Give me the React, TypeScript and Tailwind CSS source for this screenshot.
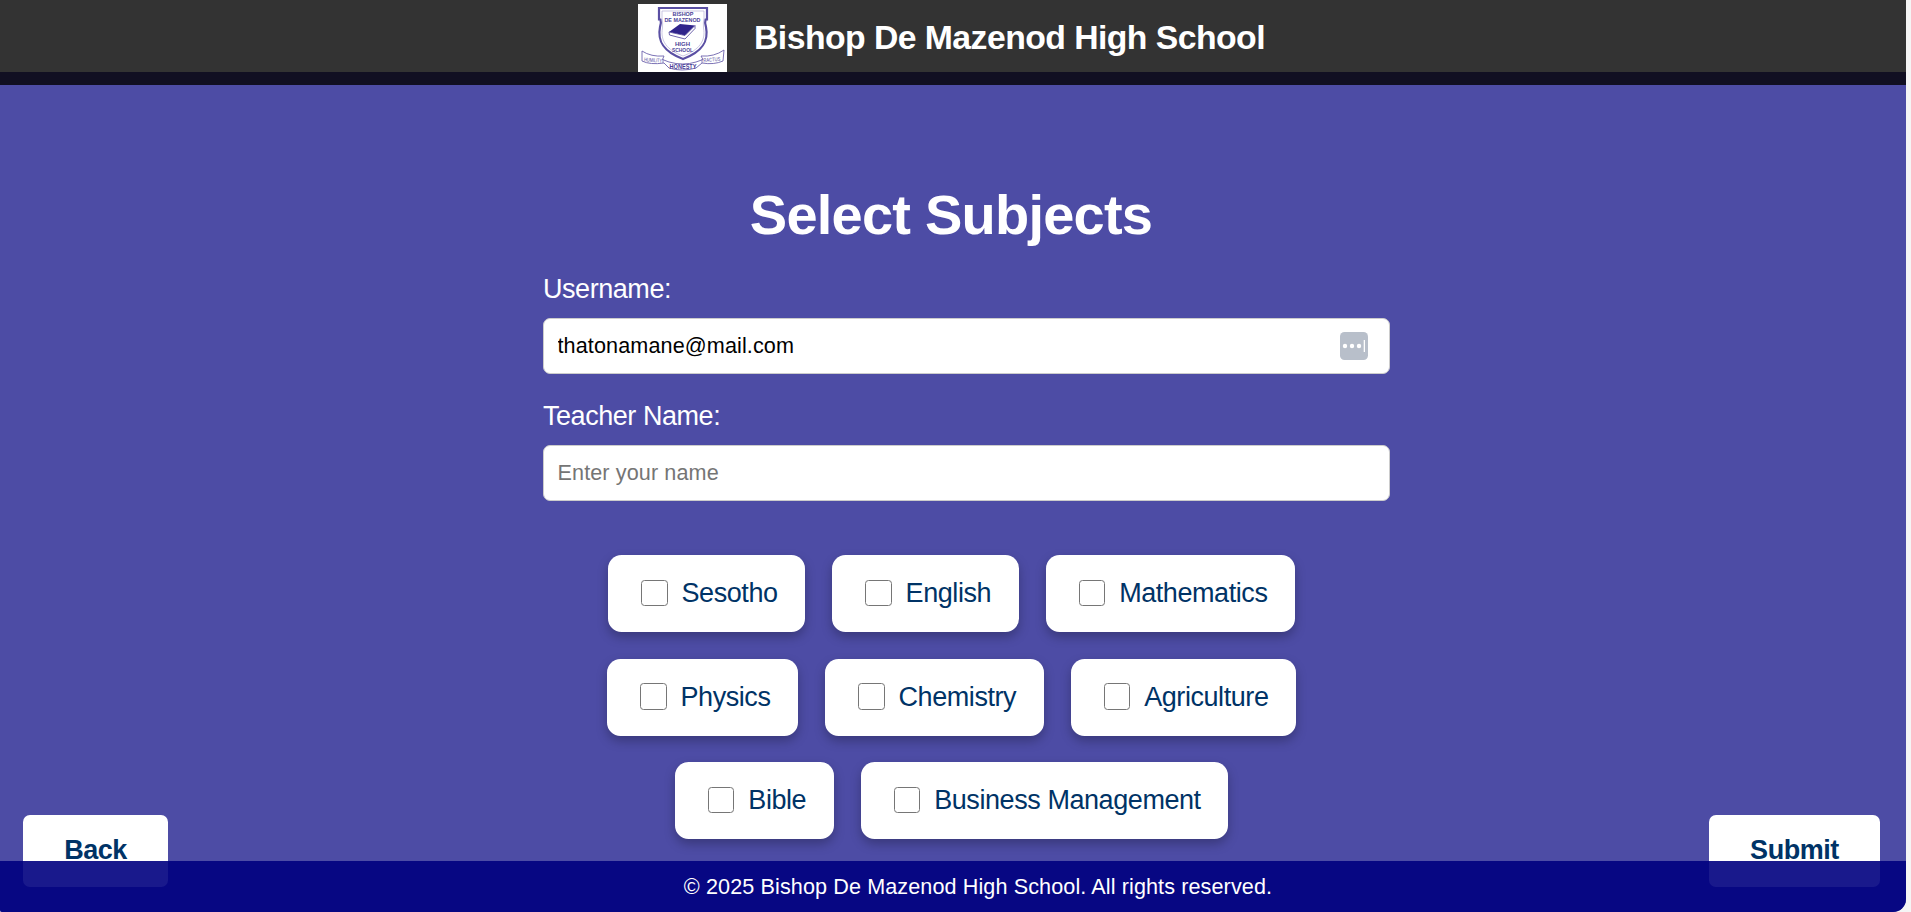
const subjectRows = [
  ["Sesotho", "English", "Mathematics"],
  ["Physics", "Chemistry", "Agriculture"],
  ["Bible", "Business Management"],
];

function Crest() {
  return (
    <svg width="89" height="68" viewBox="0 0 89 68" className="mt-1 shrink-0 bg-white" fontFamily="Liberation Sans, sans-serif" fontWeight="700" textAnchor="middle" fill="#4b3f98">
      <path d="M21 4H69V15.500H67.500Q66.500 19 68 23C71 38 64 48 45 55C26 48 19 38 22 23Q23.500 19 22.500 15.500H21Z" fill="#fff" stroke="#5a4fa3" strokeWidth="2.200" />
      <path d="M24 7H66V14Q65 19 65.500 24C68 37 61 46 45 52C29 46 22 37 24.500 24Q25 19 24 14Z" fill="none" stroke="#b5afd6" strokeWidth=".7" />
      <text x="45" y="12" fontSize="6" textLength="21" lengthAdjust="spacingAndGlyphs">BISHOP</text>
      <text x="44.500" y="18.200" fontSize="6" textLength="36" lengthAdjust="spacingAndGlyphs">DE MAZENOD</text>
      <path d="M31 28L42 20L57 21.500L47 31.500Z" fill="#30248b" />
      <path d="M31 28L47 31.500L57 21.500V24.500L47 35L31.500 31Z" fill="#fff" stroke="#4b3f98" strokeWidth=".8" />
      <text x="44.500" y="41.500" fontSize="6" textLength="15" lengthAdjust="spacingAndGlyphs">HIGH</text>
      <text x="44.500" y="47.600" fontSize="6" textLength="21" lengthAdjust="spacingAndGlyphs">SCHOOL</text>
      <path d="M4 47Q13 53 26 52L24.500 55.500L31 58Q45 62 58 58L65 55.500L63 52Q76 53 86 46L85 57Q76 61 64 59L58 64Q44 68 31 64L26 59Q12 61 4 57Z" fill="#fff" stroke="#6d63ad" strokeWidth=".9" />
      <path d="M25 55V59M64 55V59" stroke="#6d63ad" strokeWidth=".8" />
      <text x="15" y="58" fontSize="5.500" fontWeight="400" textLength="18" lengthAdjust="spacingAndGlyphs" transform="rotate(5 15 57)">HUMILITY</text>
      <text x="45" y="65" fontSize="7" textLength="27" lengthAdjust="spacingAndGlyphs">HONESTY</text>
      <text x="74" y="57.500" fontSize="5.500" fontWeight="400" textLength="17" lengthAdjust="spacingAndGlyphs" transform="rotate(-5 74 57)">RACTUS</text>
    </svg>
  );
}

function Field({ label, value, placeholder, badge }: { label: string; value?: string; placeholder?: string; badge?: boolean }) {
  return (
    <div className="flex h-[127px] flex-col">
      <label className="mb-[13px] h-[31px] text-[27px] leading-[31px] tracking-[-0.450px]">{label}</label>
      <div className="flex h-[56px] items-center rounded-[7px] border border-[#ccc] bg-white pr-[21px] pl-[13.500px]">
        <input className="mb-[2px] min-w-0 flex-1 text-[21.600px] leading-[25px] tracking-[0.110px] text-black outline-none placeholder:text-[#757575]" defaultValue={value} placeholder={placeholder} />
        {badge && (
          <svg width="28" height="28" viewBox="0 0 28 28" className="mb-[1px]">
            <rect width="28" height="28" rx="4.500" fill="#b8bfca" />
            <g fill="#fff">
              <circle cx="5" cy="14" r="2.200" />
              <circle cx="12" cy="14" r="2.200" />
              <circle cx="19" cy="14" r="2.200" />
              <rect x="23.700" y="8" width="1.300" height="12" />
            </g>
          </svg>
        )}
      </div>
    </div>
  );
}

function SubjectCard({ name }: { name: string }) {
  return (
    <label className="flex h-[77px] items-center rounded-[13.500px] bg-white pr-[27.500px] pl-[33px] text-[27px] leading-[31px] tracking-[-0.430px] text-[#003366] shadow-[0_5px_11px_rgba(0,0,0,0.26)]">
      <input type="checkbox" className="mr-[14px] mb-[1px] size-[26.500px] appearance-none rounded-[3.500px] border-[1.350px] border-[#767676] bg-white" />
      {name}
    </label>
  );
}

export default function App() {
  return (
    <div className="h-[912px] w-full overflow-hidden bg-[#f5f5f5] font-['Liberation_Sans',Arial,sans-serif]">
      <div className="grid h-full w-[1906px] grid-cols-1 grid-rows-1 overflow-hidden rounded-br-[13px] rounded-bl-[2px] bg-[#4d4ca5] text-white">
        <div className="col-start-1 row-start-1 flex flex-col">
          <header className="flex h-[85px] shrink-0 justify-center border-b-[13px] border-[#110f22] bg-[#333] pr-[3px]">
            <Crest />
            <h1 className="ml-[27px] pt-[18px] text-[33.750px] leading-[39px] font-bold tracking-[-0.550px]">Bishop De Mazenod High School</h1>
          </header>
          <main className="flex flex-col">
            <h2 className="mt-[97px] h-[65px] pr-[4px] text-center text-[56px] leading-[65px] font-bold tracking-[-0.780px]">Select Subjects</h2>
            <form className="mt-[27px] ml-[543px] w-[847px]">
              <Field label="Username:" value="thatonamane@mail.com" badge />
              <Field label="Teacher Name:" placeholder="Enter your name" />
            </form>
            <div className="mt-[27px] flex flex-col gap-[26.500px] pr-[3px]">
              {subjectRows.map((row) => (
                <div key={row[0]} className="flex justify-center gap-[27px]">
                  {row.map((name) => <SubjectCard key={name} name={name} />)}
                </div>
              ))}
            </div>
          </main>
        </div>
        <div className="col-start-1 row-start-1 mb-[25px] flex items-end justify-between self-end pr-[26px] pl-[23px] text-[27px] font-bold tracking-[-0.450px] text-[#003366]">
          <button className="h-[72px] w-[145px] rounded-[7px] bg-white pb-[2px]">Back</button>
          <button className="h-[72px] w-[171px] rounded-[7px] bg-white pb-[2px]">Submit</button>
        </div>
        <footer className="z-10 col-start-1 row-start-1 h-[51px] self-end bg-[rgba(0,0,128,0.9)] pt-[13px] pl-[50px] text-center text-[21.600px] leading-[25px] tracking-[0.100px]">
          © 2025 Bishop De Mazenod High School. All rights reserved.
        </footer>
      </div>
    </div>
  );
}
